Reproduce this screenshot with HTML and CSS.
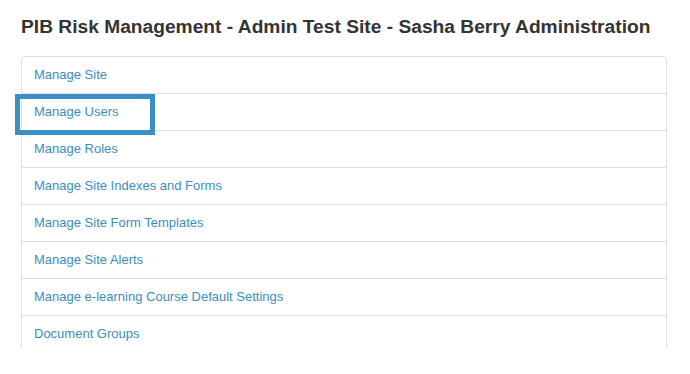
FILE: index.html
```html
<!DOCTYPE html>
<html>
<head>
<meta charset="utf-8">
<link rel="stylesheet" href="styles.css">
</head>
<body>
<div class="page">
  <h1 class="title">PIB Risk Management - Admin Test Site - Sasha Berry Administration</h1>
  <div class="list-clip">
    <ul class="list">
      <li class="item"><a href="#">Manage Site</a></li>
      <li class="item"><a href="#">Manage Users</a><span class="highlight"></span></li>
      <li class="item"><a href="#">Manage Roles</a></li>
      <li class="item"><a href="#">Manage Site Indexes and Forms</a></li>
      <li class="item"><a href="#">Manage Site Form Templates</a></li>
      <li class="item"><a href="#">Manage Site Alerts</a></li>
      <li class="item"><a href="#">Manage e-learning Course Default Settings</a></li>
      <li class="item"><a href="#">Document Groups</a></li>
    </ul>
  </div>
</div>
</body>
</html>
```
FILE: styles.css
```css
html, body {
  margin: 0;
  padding: 0;
  background: #fff;
}
.page {
  padding: 15px 23px 0 21px;
  font-family: "Liberation Sans", Arial, sans-serif;
}
.title {
  margin: 0 0 18px 0;
  font-family: "Liberation Sans", Arial, sans-serif;
  font-size: 19.2px;
  line-height: 23px;
  font-weight: bold;
  color: #333;
}
.list-clip {
  height: 292px;
  clip-path: inset(-20px -20px 0 -20px);
}
.list {
  list-style: none;
  margin: 0;
  padding: 0;
  border: 1px solid #ddd;
  border-radius: 4px 4px 0 0;
}
.item {
  position: relative;
  padding: 9px 12px;
  font-size: 13px;
  line-height: 18px;
  border-bottom: 1px solid #ddd;
}
.item a {
  color: #3c8dbc;
  text-decoration: none;
}
.highlight {
  position: absolute;
  left: -7px;
  top: 0;
  width: 140px;
  height: 41px;
  box-sizing: border-box;
  border: 5px solid #3a8ec4;
}
```
